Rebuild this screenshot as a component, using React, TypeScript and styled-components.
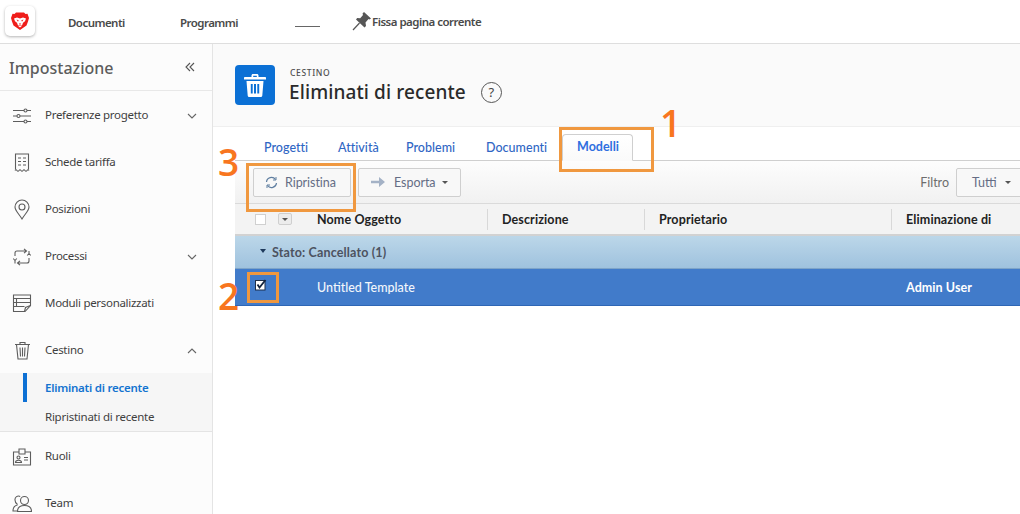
import React from "react";
import styled, { createGlobalStyle } from "styled-components";

const Global = createGlobalStyle`
  html, body { margin: 0; padding: 0; background: #fff; overflow: hidden; }
  #root { width: 1020px; height: 514px; overflow: hidden; position: relative; }
  * { box-sizing: border-box; }
`;

const Page = styled.div`
  width: 1020px; height: 514px; display: flex; flex-direction: column;
  font-family: "Noto Sans", "Open Sans", sans-serif; position: relative; overflow: hidden;
`;
const TopBar = styled.header`
  height: 44px; flex: none; display: flex; align-items: center; background: #fff;
  border-bottom: 1px solid #dedede; padding-left: 5px;
`;
const LogoTile = styled.div`
  width: 30px; height: 30px; border-radius: 5px; background: #fff; flex: none;
  box-shadow: 0 1px 3px rgba(0,0,0,.3); display: flex; align-items: center; justify-content: center;
  margin-top: -2px;
`;
const TopLink = styled.span<{ $w: number }>`
  width: ${p => p.$w}px; font-size: 11.500px; font-weight: 600; color: #4a4a4a; white-space: nowrap;
  letter-spacing: -.55px; margin-top: 1px;
`;
const Blank = styled.span`
  width: 25px; height: 1px; background: #666; margin: 9px 0 0 0; flex: none;
`;
const PinLabel = styled.span`
  display: flex; align-items: center; gap: 1px; margin-left: 32px; font-size: 11.500px; font-weight: 600;
  color: #4a4a4a; letter-spacing: -.52px; margin-top: -1px; white-space: nowrap;
`;
const Body = styled.div`
  flex: 1; display: flex; min-height: 0;
`;
const Sidebar = styled.aside`
  width: 213px; flex: none; background: #fcfcfc; border-right: 1px solid #e4e4e4; overflow: hidden;
`;
const SideHead = styled.div`
  height: 47px; display: flex; align-items: center; justify-content: space-between;
  padding: 0 17px 0 9px; border-bottom: 1px solid #e8e8e8;
`;
const SideTitle = styled.span`
  font-size: 16px; color: #5c5c5c; letter-spacing: 0; font-weight: 500; margin-top: 1px;
`;
const NavList = styled.nav`
  display: flex; flex-direction: column; padding-top: 1px;
`;
const NavRow = styled.div`
  height: 47px; flex: none; display: flex; align-items: center; padding: 0 15px 0 12px;
  font-size: 11.500px; color: #3f3f3f; letter-spacing: -.3px;
`;
const NavIcon = styled.span`
  width: 20px; height: 20px; margin-right: 13px; display: flex; align-items: center; justify-content: center; flex: none;
`;
const NavText = styled.span`
  flex: 1; white-space: nowrap; margin-top: -2px;
`;
const Sub = styled.div`
  background: #f6f6f6; border-bottom: 1px solid #e4e4e4; height: 59px; margin: -1px 0 1px;
  display: flex; flex-direction: column; padding-top: 1px;
`;
const SubRow = styled.div<{ $active?: boolean }>`
  height: 29px; flex: none; display: flex; align-items: center; padding: 0 0 2px 45px; position: relative;
  font-size: 11.500px; letter-spacing: -.25px; color: ${p => (p.$active ? "#1473d0" : "#3f3f3f")};
  font-weight: ${p => (p.$active ? 600 : 400)};
  ${p => p.$active && `&::before { content: ""; position: absolute; left: 23px; top: -1px; width: 4px; height: 29px; background: #0d70d4; }`}
`;
const Main = styled.main`
  flex: 1; min-width: 0; display: flex; flex-direction: column; background: #fff;
`;
const MainHead = styled.div`
  height: 83px; flex: none; background: #fafafa; border-bottom: 1px solid #efefef;
  display: flex; align-items: flex-start; padding: 21px 0 0 22px;
`;
const TrashTile = styled.div`
  width: 40px; height: 40px; border-radius: 4px; background: #0b70d5; flex: none;
  display: flex; align-items: center; justify-content: center;
`;
const TitleBlock = styled.div`
  margin-left: 15px; display: flex; flex-direction: column;
`;
const Eyebrow = styled.span`
  font-size: 8.500px; line-height: 12px; color: #505050; letter-spacing: .65px; font-weight: 500; margin-top: 2px;
`;
const TitleRow = styled.div`
  display: flex; align-items: center;
`;
const Title = styled.h1`
  margin: 0 0 0 -1px; font-size: 19px; line-height: 26px; font-weight: 500; color: #2a2a2a; letter-spacing: .1px; white-space: nowrap;
`;
const Help = styled.span`
  width: 21px; height: 21px; border: 1px solid #555; border-radius: 50%; margin-left: 15px;
  display: flex; align-items: center; justify-content: center; font-size: 13px; color: #444;
`;
const Content = styled.div`
  flex: 1; margin-left: 22px; min-width: 0; font-family: Lato, "Liberation Sans", sans-serif;
`;
const Tabs = styled.div`
  height: 34px; display: flex; align-items: flex-end; border-bottom: 1px solid #cfcfcf; padding-left: 29px;
`;
const Tab = styled.span<{ $w: number }>`
  width: ${p => p.$w}px; font-size: 12.500px; color: #2f66c4; height: 26px; line-height: 27px; white-space: nowrap; font-weight: 500;
  letter-spacing: .03px;
`;
const ActiveTab = styled.span`
  width: 71px; height: 27px; margin: 0 0 -1px -1px; padding-left: 1px; text-align: center; line-height: 24px; font-size: 12.500px;
  color: #2f6fe0; font-weight: 700; background: linear-gradient(#fff, #fafafa); border: 1px solid #cfcfcf;
  border-bottom-color: #fafafa; border-radius: 4px 4px 0 0;
`;
const Toolbar = styled.div`
  height: 43px; display: flex; align-items: center; padding: 0 0 0 18px; gap: 7px; position: relative;
  background: linear-gradient(#fdfdfd, #f1f1f1); border-bottom: 1px solid #dadada;
`;
const ToolButton = styled.span<{ $w: number; $gap: number; $pad: number }>`
  width: ${p => p.$w}px; height: 29px; border: 1px solid #cfcfcf; border-radius: 2px; background: #f8f8f8;
  display: flex; align-items: center; gap: ${p => p.$gap}px; padding-left: ${p => p.$pad}px; font-size: 12.500px; letter-spacing: -.05px; color: #656d85; flex: none; white-space: nowrap;
`;
const Caret = styled.span`
  width: 0; height: 0; border: 3px solid transparent; border-top: 3px solid #555; border-bottom: 0; display: inline-block;
`;
const ExportCaret = styled(Caret)`
  margin-left: -3px;
`;
const FilterBox = styled.div`
  margin-left: auto; display: flex; align-items: center; gap: 7px; font-size: 12.500px; color: #6d6d6d; margin-right: -1px;
`;
const FilterButton = styled.span`
  width: 65px; height: 29px; border: 1px solid #cfcfcf; border-radius: 2px 0 0 2px; background: #f8f8f8; color: #656d85;
  display: flex; align-items: center; gap: 8px; padding-left: 15px;
`;
const TableHead = styled.div`
  height: 32px; display: flex; align-items: center; background: #f3f3f3; border-bottom: 2px solid #d2d2d2;
  font-size: 12.500px; letter-spacing: .12px; font-weight: 700; color: #222;
`;
const ChecksCell = styled.div`
  width: 69px; flex: none; display: flex; align-items: center; padding-left: 20px; gap: 12px;
`;
const HeadCheck = styled.span`
  width: 11px; height: 11px; border: 1px solid #d0d0d0; background: #fff; flex: none;
`;
const HeadMenu = styled.span`
  width: 14px; height: 12px; border: 1px solid #cfcfcf; border-radius: 2px; background: #ececec; flex: none;
  display: flex; align-items: center; justify-content: center;
`;
const HeadCell = styled.div<{ $w: number; $pad?: number; $sep?: boolean }>`
  width: ${p => p.$w}px; flex: none; height: 21px; line-height: 21px; padding-left: ${p => p.$pad ?? 13}px; white-space: nowrap;
  border-left: ${p => (p.$sep === false ? "none" : "1px solid #d8d8d8")};
`;
const GroupRow = styled.div`
  height: 33px; display: flex; align-items: center; padding-left: 25px; gap: 6px;
  background: linear-gradient(#bcd7e9, #9fc2de); font-size: 12.500px; letter-spacing: .15px; font-weight: 700; color: #4c5260;
  border-bottom: 1px solid #7ea4c8;
`;
const GroupCaret = styled.span`
  width: 0; height: 0; border: 3.500px solid transparent; border-top: 4px solid #1e3a5c; border-bottom: 0; margin-top: -3px;
`;
const SelectedRow = styled.div`
  height: 37px; display: flex; align-items: center; background: #417bca; border-bottom: 1px solid #2e66b5;
  color: #fff; font-size: 12.500px;
`;
const RowCheckCell = styled.div`
  width: 82px; flex: none; padding: 0 0 4px 20px; display: flex; align-items: center;
`;
const RowName = styled.div`
  width: 589px; flex: none; font-weight: 500; color: #f2f6fb;
`;
const RowUser = styled.div`
  font-weight: 700; color: #fff; letter-spacing: .08px;
`;
const Mark = styled.div<{ $x: number; $y: number; $w: number; $h: number }>`
  position: absolute; left: ${p => p.$x}px; top: ${p => p.$y}px; width: ${p => p.$w}px; height: ${p => p.$h}px;
  border: 3px solid #f0983f; pointer-events: none;
`;
const Num = styled.span<{ $x: number; $y: number }>`
  position: absolute; left: ${p => p.$x}px; top: ${p => p.$y}px; font-family: "Open Sans", sans-serif; font-size: 37px; line-height: 40px;
  font-weight: 600; color: #f8761f;
`;

const S = { fill: "none", stroke: "#5d5d5d", strokeWidth: 1.1 };

const Chevron = ({ up }: { up?: boolean }) => (
  <svg width="10" height="6" viewBox="0 0 10 6" fill="none" stroke="#666" strokeWidth="1.1">
    <path d={up ? "M1 5l4-4 4 4" : "M1 1l4 4 4-4"} />
  </svg>
);

const Sliders = () => (
  <svg width="20" height="16" viewBox="0 0 20 16" {...S}>
    <path d="M1 2.500h11M15 2.500h4M1 8h4M8 8h11M1 13.500h11M15 13.500h4" />
    <circle cx="13.500" cy="2.500" r="1.500" /><circle cx="6.500" cy="8" r="1.500" /><circle cx="13.500" cy="13.500" r="1.500" />
  </svg>
);
const Receipt = () => (
  <svg width="16" height="19" viewBox="0 0 16 19" {...S}>
    <path d="M1.500 16.500V1h13v15.500" />
    <path d="M1 17.500q1-1.500 2 0t2 0 2 0 2 0 2 0 2 0 2 0" />
    <path d="M4 5h3M9 5h3M4 8.500h3M9 8.500h3M4 12h3M9 12h3" />
  </svg>
);
const Pin = () => (
  <svg width="16" height="21" viewBox="0 0 16 21" {...S}>
    <path d="M8 20C5 15 1 11.500 1 8a7 7 0 0 1 14 0c0 3.500-4 7-7 12z" />
    <circle cx="8" cy="8" r="3" />
  </svg>
);
const Cycle = () => (
  <svg width="18" height="18" viewBox="0 0 18 18" {...S}>
    <path d="M2 8V5a2 2 0 0 1 2-2h9.500M11 .8l2.500 2.200L11 5.200" />
    <path d="M16 10v3a2 2 0 0 1-2 2H4.500M7 12.800L4.500 15 7 17.200" />
    <path d="M.2 10.500L2 12.500l1.800-2M2 12.500V15.500M14.200 7.500L16 5.500l1.800 2M16 5.500V3" />
  </svg>
);
const FormIcon = () => (
  <svg width="20" height="19" viewBox="0 0 20 19" {...S}>
    <path d="M1.500 1h17v10.500l-5.500 6h-11.500z" />
    <path d="M1.500 4.500h17M1.500 8.500h17M1.500 12.500h11M4.500 4.500v8M12.500 17.500l1-4 5-2" />
  </svg>
);
const TrashLine = () => (
  <svg width="17" height="19" viewBox="0 0 17 19" {...S}>
    <path d="M1 3.500h15M6 3.500V1.500h5v2M2.500 3.500l1.500 14.500h9l1.500-14.500M6 6.500l.5 9M8.500 6.500v9M11 6.500l-.5 9" />
  </svg>
);
const Badge = () => (
  <svg width="20" height="18" viewBox="0 0 20 18" {...S}>
    <path d="M7 4H1.500v13h17V4H13M7 1h6v5H7z" />
    <circle cx="6.500" cy="9.500" r="1.500" />
    <path d="M3.500 14.500c0-3 6-3 6 0zM12 9.500h4M12 12h4" />
  </svg>
);
const People = () => (
  <svg width="20" height="17" viewBox="0 0 20 17" {...S}>
    <path d="M5.500 10C3 10.500 1 12 1 16h4" />
    <path d="M8.200 1.500A3.500 3.500 0 0 0 3 5c0 2 1 3.500 2.500 4.500" />
    <circle cx="12.500" cy="5.500" r="4" /><path d="M5.500 16.500c0-4.500 3-6 7-6s7 1.500 7 6z" />
  </svg>
);
const Restore = () => (
  <svg width="13" height="13" viewBox="0 0 13 13" fill="none" stroke="#5f7ea0" strokeWidth="1.2">
    <path d="M1.500 6a5 5 0 0 1 9-2.500M11.500 7a5 5 0 0 1-9 2.500" />
    <path d="M11 1v3H8M2 12V9h3" strokeWidth="1" />
  </svg>
);
const Arrow = () => (
  <svg width="14" height="10" viewBox="0 0 14 10" fill="#a4b2c6"><path d="M0 3.800h8V0l6 5-6 5V6.200H0z" /></svg>
);
const Checked = () => (
  <svg width="12" height="12" viewBox="0 0 12 12">
    <rect x=".5" y="1.500" width="9.500" height="9.500" fill="#fff" stroke="#1d2f4a" />
    <path d="M2.500 5.500l2 3L10.500 1" fill="none" stroke="#13233c" strokeWidth="1.8" />
  </svg>
);

export default function App() {
  return (
    <Page>
      <Global />
      <TopBar>
        <LogoTile>
          <svg width="18" height="18" viewBox="0 0 18 18">
            <path fill="#ef1d1a" d="M5 .5h8L14.500 2l2-.3L18 6l-1 3.500-1.500 4L9 18l-6.500-4.500L1 9.500 0 6l1.500-4.300 2 .3z" />
            <path fill="#fff" d="M3 6.500L6 5.500l3 1 3-1 3 1-1 2.800-2 1.500-1 2.700H7l-1-2.700-2-1.500z" />
            <path fill="#ef1d1a" d="M5.500 7.500l2.200.8-.7 1.500zM12.500 7.500l-2.200.8.700 1.500zM7.800 11.500h2.400L9 13z" />
            <path fill="#fff" d="M7.200 14h3.600L9 15.500z" />
          </svg>
        </LogoTile>
        <TopLink $w={112} style={{ marginLeft: 33 }}>Documenti</TopLink>
        <TopLink $w={115}>Programmi</TopLink>
        <Blank />
        <PinLabel>
          <svg width="19" height="19" viewBox="0 0 19 19">
            <path fill="#565656" d="M12 0l7 6.500-1.500 1-1-.5-3 3.500.5 3.500-1.500 1.500L4 7.500 5.200 6l3 .3L11 3l-.5-1.500z" />
            <path stroke="#565656" strokeWidth="1.2" fill="none" d="M7.500 11L1 18" />
          </svg>
          Fissa pagina corrente
        </PinLabel>
      </TopBar>
      <Body>
        <Sidebar>
          <SideHead>
            <SideTitle>Impostazione</SideTitle>
            <svg width="10" height="10" viewBox="0 0 10 10" fill="none" stroke="#555" strokeWidth="1.1">
              <path d="M5 1L1 5l4 4M9 1L5 5l4 4" />
            </svg>
          </SideHead>
          <NavList>
            <NavRow><NavIcon><Sliders /></NavIcon><NavText>Preferenze progetto</NavText><Chevron /></NavRow>
            <NavRow><NavIcon><Receipt /></NavIcon><NavText>Schede tariffa</NavText></NavRow>
            <NavRow><NavIcon><Pin /></NavIcon><NavText>Posizioni</NavText></NavRow>
            <NavRow><NavIcon><Cycle /></NavIcon><NavText>Processi</NavText><Chevron /></NavRow>
            <NavRow><NavIcon><FormIcon /></NavIcon><NavText>Moduli personalizzati</NavText></NavRow>
            <NavRow><NavIcon><TrashLine /></NavIcon><NavText>Cestino</NavText><Chevron up /></NavRow>
            <Sub>
              <SubRow $active>Eliminati di recente</SubRow>
              <SubRow>Ripristinati di recente</SubRow>
            </Sub>
            <NavRow><NavIcon><Badge /></NavIcon><NavText>Ruoli</NavText></NavRow>
            <NavRow><NavIcon><People /></NavIcon><NavText>Team</NavText></NavRow>
          </NavList>
        </Sidebar>
        <Main>
          <MainHead>
            <TrashTile>
              <svg width="22" height="23" viewBox="0 0 22 23" fill="#fff">
                <path d="M7.500 3V1.500C7.500.7 8.200 0 9 0h4c.8 0 1.500.7 1.500 1.500V3H21c.6 0 1 .4 1 1v1.500H0V4c0-.6.4-1 1-1zM9.200 3h3.600V1.700H9.200z" fillRule="evenodd" />
                <path d="M2.500 7h17l-1.200 14.500c0 .9-.7 1.500-1.500 1.500H5.200c-.8 0-1.500-.6-1.500-1.500zM6.800 10v9.500h1.900V10zM10 10v9.500h2V10zM13.300 10v9.500h1.900V10z" fillRule="evenodd" />
              </svg>
            </TrashTile>
            <TitleBlock>
              <Eyebrow>CESTINO</Eyebrow>
              <TitleRow>
                <Title>Eliminati di recente</Title>
                <Help>?</Help>
              </TitleRow>
            </TitleBlock>
          </MainHead>
          <Content>
            <Tabs>
              <Tab $w={74}>Progetti</Tab>
              <Tab $w={68}>Attività</Tab>
              <Tab $w={80}>Problemi</Tab>
              <Tab $w={77}>Documenti</Tab>
              <ActiveTab>Modelli</ActiveTab>
            </Tabs>
            <Toolbar>
              <ToolButton $w={98} $gap={7} $pad={11}><Restore />Ripristina</ToolButton>
              <ToolButton $w={103} $gap={9} $pad={12}><Arrow />Esporta <ExportCaret /></ToolButton>
              <FilterBox>
                Filtro
                <FilterButton>Tutti <Caret /></FilterButton>
              </FilterBox>
            </Toolbar>
            <TableHead>
              <ChecksCell>
                <HeadCheck />
                <HeadMenu><Caret /></HeadMenu>
              </ChecksCell>
              <HeadCell $w={183} $pad={13} $sep={false}>Nome Oggetto</HeadCell>
              <HeadCell $w={157} $pad={14}>Descrizione</HeadCell>
              <HeadCell $w={247} $pad={14}>Proprietario</HeadCell>
              <HeadCell $w={121} $pad={14}>Eliminazione di</HeadCell>
            </TableHead>
            <GroupRow><GroupCaret />Stato: Cancellato (1)</GroupRow>
            <SelectedRow>
              <RowCheckCell><Checked /></RowCheckCell>
              <RowName>Untitled Template</RowName>
              <RowUser>Admin User</RowUser>
            </SelectedRow>
          </Content>
        </Main>
      </Body>
      <Mark $x={559} $y={127} $w={95} $h={45} />
      <Mark $x={246} $y={163} $w={110} $h={49} />
      <Mark $x={247} $y={272} $w={32} $h={31} />
      <Num $x={660} $y={103}>1</Num>
      <Num $x={218} $y={142}>3</Num>
      <Num $x={218} $y={276}>2</Num>
    </Page>
  );
}
